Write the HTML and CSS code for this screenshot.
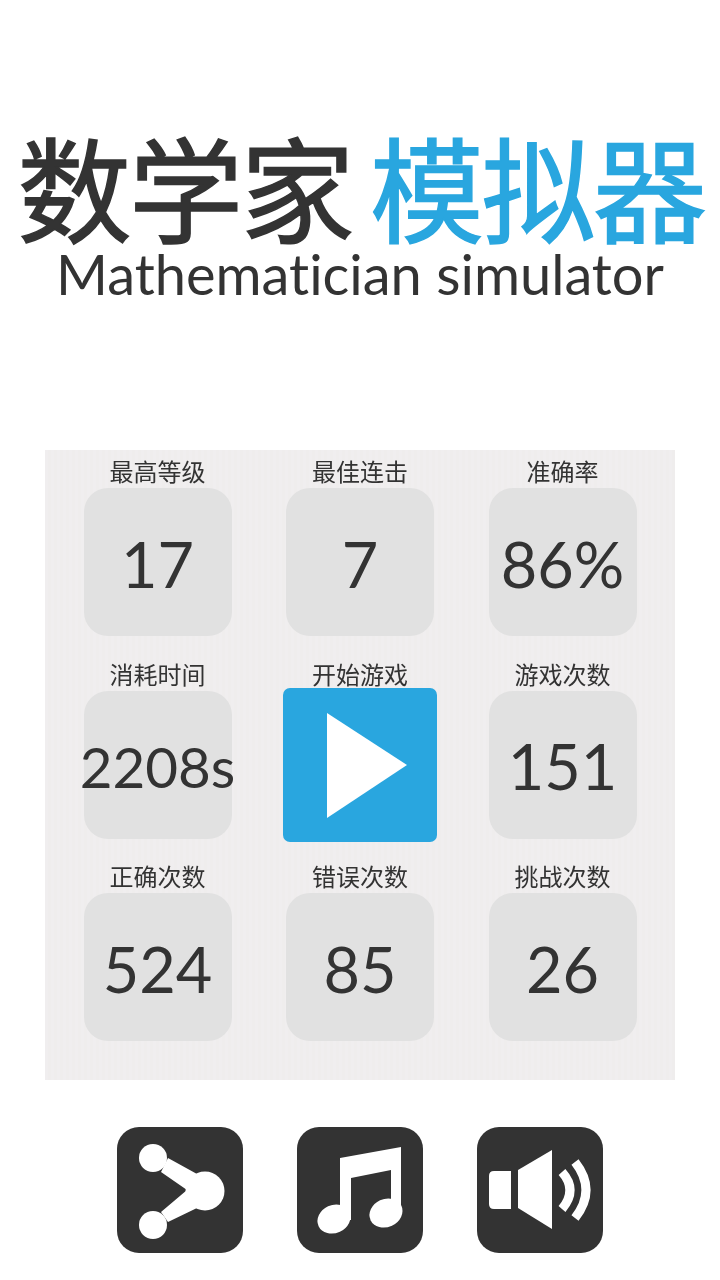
FILE: index.html
```html
<!DOCTYPE html>
<html lang="zh-CN">
<head>
    <meta charset="UTF-8">
    <title>数学家模拟器</title>

    <link rel="stylesheet" href="styles.css">
</head>
<body>

<header class="title-box">
    <h1 class="title">数学家 <span class="title-accent">模拟器</span></h1>
    <p class="subtitle">Mathematician simulator</p>
</header>

<main class="stats">
    <div class="stat">
        <div class="stat-label">最高等级</div>
        <div class="stat-tile">17</div>
    </div>
    <div class="stat">
        <div class="stat-label">最佳连击</div>
        <div class="stat-tile">7</div>
    </div>
    <div class="stat">
        <div class="stat-label">准确率</div>
        <div class="stat-tile">86%</div>
    </div>

    <div class="stat">
        <div class="stat-label">消耗时间</div>
        <div class="stat-tile stat-tile-long">2208s</div>
    </div>
    <div class="stat">
        <div class="stat-label">开始游戏</div>
        <button class="play-btn" type="button">
            <svg viewBox="0 0 154 154" width="154" height="154">
                <polygon points="44,25 124,77 44,130" fill="#fff"/>
            </svg>
        </button>
    </div>
    <div class="stat">
        <div class="stat-label">游戏次数</div>
        <div class="stat-tile">151</div>
    </div>

    <div class="stat">
        <div class="stat-label">正确次数</div>
        <div class="stat-tile">524</div>
    </div>
    <div class="stat">
        <div class="stat-label">错误次数</div>
        <div class="stat-tile">85</div>
    </div>
    <div class="stat">
        <div class="stat-label">挑战次数</div>
        <div class="stat-tile">26</div>
    </div>
</main>

<nav class="tools">
    <button class="tool-btn" type="button">
        <svg viewBox="0 0 126 126" width="126" height="126">
            <polygon points="51,31 80,47 88,64 80,81 51,95 44,85 70,63 44,45" fill="#fff"/>
            <circle cx="36" cy="31" r="14" fill="#fff"/>
            <circle cx="36" cy="98" r="14" fill="#fff"/>
            <circle cx="88" cy="64" r="19.5" fill="#fff"/>
        </svg>
    </button>
    <button class="tool-btn" type="button">
        <svg viewBox="0 0 126 126" width="126" height="126">
            <path d="M43 31 L104 20 V85 H94 V43 L54 51 V93 H43 Z" fill="#fff"/>
            <ellipse cx="37" cy="92" rx="17" ry="14" transform="rotate(-25 37 92)" fill="#fff"/>
            <ellipse cx="89" cy="86" rx="17" ry="14" transform="rotate(-25 89 86)" fill="#fff"/>
        </svg>
    </button>
    <button class="tool-btn" type="button">
        <svg viewBox="0 0 126 126" width="126" height="126">
            <path d="M34 44 V82 H17 Q12 82 12 77 V49 Q12 44 17 44 Z" fill="#fff"/>
            <polygon points="41,43 75,23 75,102 41,81" fill="#fff"/>
            <path d="M85 45 Q101 63 85 82" fill="none" stroke="#fff" stroke-width="9"/>
            <path d="M98 35 Q120 63 98 91" fill="none" stroke="#fff" stroke-width="9"/>
        </svg>
    </button>
</nav>

</body>
</html>
```

FILE: styles.css
```css
body {
    margin: 0;
    background: #fff;
    color: #333;
    font-family: "Noto Sans CJK SC", sans-serif;
}

.title-box {
    height: 450px;
    padding-top: 117px;
    box-sizing: border-box;
    text-align: center;
}

.title {
    margin: 0;
    padding-left: 2px;
    font-size: 114px;
    font-weight: 400;
    -webkit-text-stroke: 1.5px;
    letter-spacing: -2.5px;
    word-spacing: -5px;
    line-height: 136px;
    white-space: nowrap;
}

.title-accent {
    color: #29a6df;
}

.subtitle {
    margin: 0;
    font-family: Lato, sans-serif;
    font-size: 56px;
    font-variant-ligatures: none;
    line-height: 42px;
}

.stats {
    width: 630px;
    height: 630px;
    margin: 0 auto;
    padding: 0 11.25px;
    box-sizing: border-box;
    display: grid;
    grid-template-columns: repeat(3, 1fr);
    grid-auto-rows: 202.5px;
    background: #f0eeef repeating-linear-gradient(90deg, #f0eeef 0, #f0eeef 3px, #efeded 3px, #efeded 6px);
}

.stat {
    display: flex;
    flex-direction: column;
    align-items: center;
}

.stat-label {
    height: 38px;
    font-size: 24px;
    line-height: 42px;
    filter: blur(0.3px);
}

.stat-tile {
    width: 148px;
    height: 148px;
    padding-top: 2px;
    box-sizing: border-box;
    border-radius: 24px;
    background: #e1e1e1;
    display: flex;
    align-items: center;
    justify-content: center;
    font-family: Lato, sans-serif;
    font-size: 63px;
    white-space: nowrap;
    filter: blur(0.6px);
}

.stat-tile-long {
    font-size: 56.5px;
}

.play-btn {
    width: 154px;
    height: 154px;
    margin-top: -3px;
    padding: 0;
    border: 0;
    border-radius: 7px;
    background: #29a6df;
    filter: blur(0.3px);
}

.play-btn svg,
.tool-btn svg {
    display: block;
}

.tools {
    display: flex;
    justify-content: center;
    gap: 54px;
    margin-top: 47px;
}

.tool-btn {
    width: 126px;
    height: 126px;
    padding: 0;
    border: 0;
    border-radius: 22px;
    background: #333;
    filter: blur(0.6px);
}
```
